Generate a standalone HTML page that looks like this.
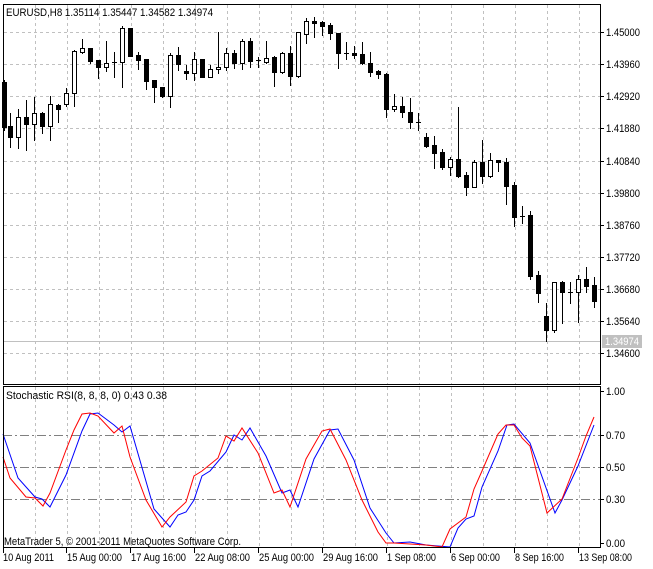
<!DOCTYPE html>
<html><head><meta charset="utf-8"><style>
html,body{margin:0;padding:0;background:#fff;}
svg{display:block;}
text{font-family:"Liberation Sans",sans-serif;font-size:11px;fill:#000;}
</style></head><body>
<svg id="s" width="653" height="569" viewBox="0 0 653 569" xmlns="http://www.w3.org/2000/svg" shape-rendering="crispEdges">
<rect width="653" height="569" fill="#fff"/>
<g id="grid" stroke="#c0c0c0" stroke-width="1" stroke-dasharray="3,3"></g>
<g stroke="#808080" stroke-width="1" stroke-dasharray="9,3,2,3">
<line x1="3" y1="435.5" x2="600" y2="435.5"/>
<line x1="3" y1="467.5" x2="600" y2="467.5"/>
<line x1="3" y1="499.5" x2="600" y2="499.5"/>
</g>
<line x1="3" y1="341.5" x2="600" y2="341.5" stroke="#c0c0c0"/>
<g id="candles"></g>
<g fill="none" stroke-width="1" shape-rendering="auto">
<polyline stroke="#0000ff" points="3,434 18,478 35,497 42,499 50,507 66,475 82,431 90,414 98,413 114,425 122,432 130,426 154,509 170,527 178,515 186,512 194,500 202,476 210,471 226,452 234,435 242,440 250,428 266,456 282,493 290,490 298,507 314,459 330,430 338,429 354,460 370,508 386,533 394,543 410,542 426,545 450,547 458,528 466,519 474,516 482,487 498,451 507,425 514,424 530,443 555,513 562,500 578,466 594,425"/>
<polyline stroke="#ff0000" points="3,457 10,478 26,497 35,498 43,506 50,493 66,450 74,430 82,414 90,413 98,416 114,433 122,426 130,457 146,500 162,527 170,517 186,502 194,476 202,471 218,458 226,436 234,441 242,428 258,453 274,493 282,490 290,507 306,459 322,431 330,429 346,460 362,500 378,532 386,543 394,543 410,544 426,545 442,547 450,529 466,517 474,489 482,471 498,434 506,425 514,425 522,438 530,446 547,513 562,499 578,458 586,436 594,417"/>
</g>
<g stroke="#000" fill="none">
<rect x="3.5" y="4.5" width="597" height="380"/>
<rect x="3.5" y="386.5" width="597" height="161"/>
</g>
<g id="ticks" stroke="#000"></g>
<rect x="602" y="335" width="40" height="13" fill="#c0c0c0"/>
<g lengthAdjust="spacingAndGlyphs">
<text x="605" y="345" style="fill:#fff" textLength="34" lengthAdjust="spacingAndGlyphs">1.34974</text>
<text x="606" y="36" textLength="34" lengthAdjust="spacingAndGlyphs">1.45000</text>
<text x="606" y="68" textLength="34" lengthAdjust="spacingAndGlyphs">1.43960</text>
<text x="606" y="100" textLength="34" lengthAdjust="spacingAndGlyphs">1.42920</text>
<text x="606" y="132" textLength="34" lengthAdjust="spacingAndGlyphs">1.41880</text>
<text x="606" y="165" textLength="34" lengthAdjust="spacingAndGlyphs">1.40840</text>
<text x="606" y="197" textLength="34" lengthAdjust="spacingAndGlyphs">1.39800</text>
<text x="606" y="229" textLength="34" lengthAdjust="spacingAndGlyphs">1.38760</text>
<text x="606" y="261" textLength="34" lengthAdjust="spacingAndGlyphs">1.37720</text>
<text x="606" y="293" textLength="34" lengthAdjust="spacingAndGlyphs">1.36680</text>
<text x="606" y="325" textLength="34" lengthAdjust="spacingAndGlyphs">1.35640</text>
<text x="606" y="357" textLength="34" lengthAdjust="spacingAndGlyphs">1.34600</text>
<text x="606" y="395" textLength="19" lengthAdjust="spacingAndGlyphs">1.00</text>
<text x="606" y="439" textLength="19" lengthAdjust="spacingAndGlyphs">0.70</text>
<text x="606" y="471" textLength="19" lengthAdjust="spacingAndGlyphs">0.50</text>
<text x="606" y="503" textLength="19" lengthAdjust="spacingAndGlyphs">0.30</text>
<text x="606" y="547" textLength="19" lengthAdjust="spacingAndGlyphs">0.00</text>
<text x="6" y="16" textLength="207" lengthAdjust="spacingAndGlyphs">EURUSD,H8  1.35114 1.35447 1.34582 1.34974</text>
<text x="6" y="399" textLength="161" lengthAdjust="spacingAndGlyphs">Stochastic RSI(8, 8, 8, 0) 0.43 0.38</text>
<text x="4" y="545" textLength="237" lengthAdjust="spacingAndGlyphs">MetaTrader 5, © 2001-2011 MetaQuotes Software Corp.</text>
<text x="3" y="561" textLength="51" lengthAdjust="spacingAndGlyphs">10 Aug 2011</text>
<text x="67" y="561" textLength="55" lengthAdjust="spacingAndGlyphs">15 Aug 00:00</text>
<text x="131" y="561" textLength="55" lengthAdjust="spacingAndGlyphs">17 Aug 16:00</text>
<text x="195" y="561" textLength="55" lengthAdjust="spacingAndGlyphs">22 Aug 08:00</text>
<text x="259" y="561" textLength="55" lengthAdjust="spacingAndGlyphs">25 Aug 00:00</text>
<text x="323" y="561" textLength="55" lengthAdjust="spacingAndGlyphs">29 Aug 16:00</text>
<text x="387" y="561" textLength="49" lengthAdjust="spacingAndGlyphs">1 Sep 08:00</text>
<text x="451" y="561" textLength="49" lengthAdjust="spacingAndGlyphs">6 Sep 00:00</text>
<text x="515" y="561" textLength="49" lengthAdjust="spacingAndGlyphs">8 Sep 16:00</text>
<text x="579" y="561" textLength="53" lengthAdjust="spacingAndGlyphs">13 Sep 08:00</text>
</g>
</svg>
<script>
var NS="http://www.w3.org/2000/svg";
function el(p,t,a){var e=document.createElementNS(NS,t);for(var k in a)e.setAttribute(k,a[k]);p.appendChild(e);return e;}
var g=document.getElementById("grid");
for(var x=35;x<600;x+=32){el(g,"line",{x1:x+.5,y1:5,x2:x+.5,y2:384});el(g,"line",{x1:x+.5,y1:387,x2:x+.5,y2:547});}
var hy=[32,64,96,128,161,193,225,257,289,321,353];
hy.forEach(function(y){el(g,"line",{x1:4,y1:y+.5,x2:600,y2:y+.5});});
var tk=document.getElementById("ticks");
hy.concat([391,435,467,499,543]).forEach(function(y){el(tk,"line",{x1:600,y1:y+.5,x2:604,y2:y+.5});});
[3,66,130,194,258,322,386,450,514,578].forEach(function(x){el(tk,"line",{x1:x+.5,y1:548,x2:x+.5,y2:553});});
var C=[[4,80,130,82,127,0],[10,113,147,126,137,0],[18,109,148,117,137,1],[26,100,150,117,124,0],[34,97,140,113,124,1],[42,112,133,113,126,0],[50,96,140,104,126,1],[58,104,122,105,109,0],[66,88,106,93,104,1],[74,50,106,51,93,1],[82,39,53,48,52,1],[90,48,63,48,61,0],[98,60,78,60,67,0],[106,41,71,63,67,1],[114,52,77,62,63,2],[122,26,87,28,62,1],[130,28,56,28,56,0],[138,52,69,55,60,0],[146,59,89,59,81,0],[154,80,102,80,87,0],[162,87,97,87,96,0],[170,53,107,55,96,1],[178,47,70,55,64,0],[186,65,79,71,73,0],[194,52,80,59,73,1],[202,59,77,59,77,0],[210,65,77,69,77,1],[218,32,73,67,69,1],[226,48,70,53,67,1],[234,50,68,53,63,0],[242,39,69,41,63,1],[250,38,67,41,61,0],[258,57,67,60,62,2],[266,41,63,58,62,1],[274,56,86,57,72,0],[282,52,73,53,72,1],[290,46,85,53,76,0],[298,32,77,32,76,1],[306,18,43,21,34,1],[314,17,37,21,23,0],[322,21,35,22,26,0],[330,23,39,25,33,0],[338,33,68,33,53,0],[346,42,59,53,53,2],[354,46,58,53,55,0],[362,42,64,54,63,0],[370,52,76,63,72,0],[378,70,78,71,74,0],[386,73,117,74,109,0],[394,94,111,106,109,1],[402,97,117,106,112,0],[410,98,128,112,122,0],[418,113,130,122,122,2],[426,133,147,137,146,0],[434,136,168,145,153,0],[442,149,169,152,167,0],[450,157,175,159,167,1],[458,107,177,159,176,0],[466,172,195,175,187,0],[474,160,187,162,187,1],[482,140,183,162,176,0],[490,153,177,160,176,1],[498,160,171,160,162,0],[506,158,204,162,186,0],[514,182,226,185,217,0],[522,206,223,216,216,2],[530,211,279,215,276,0],[538,271,302,275,293,0],[546,303,341,316,330,0],[554,282,332,282,330,1],[562,281,323,282,292,0],[570,282,303,292,292,2],[578,275,322,279,292,1],[586,267,292,279,286,0],[594,277,307,285,301,0]];
var cg=document.getElementById("candles");
C.forEach(function(c){var x=c[0],h=c[1],l=c[2],t=c[3],b=c[4],k=c[5];
el(cg,"line",{x1:x+.5,y1:h,x2:x+.5,y2:l+1,stroke:"#000"});
if(k==2){el(cg,"line",{x1:x-2,y1:t+.5,x2:x+3,y2:t+.5,stroke:"#000"});}
else if(k==0){el(cg,"rect",{x:x-2,y:t,width:5,height:Math.max(1,b-t+1),fill:"#000"});}
else{el(cg,"rect",{x:x-1.5,y:t+.5,width:4,height:Math.max(1,b-t),fill:"#fff",stroke:"#000"});}
});
</script>
</body></html>
